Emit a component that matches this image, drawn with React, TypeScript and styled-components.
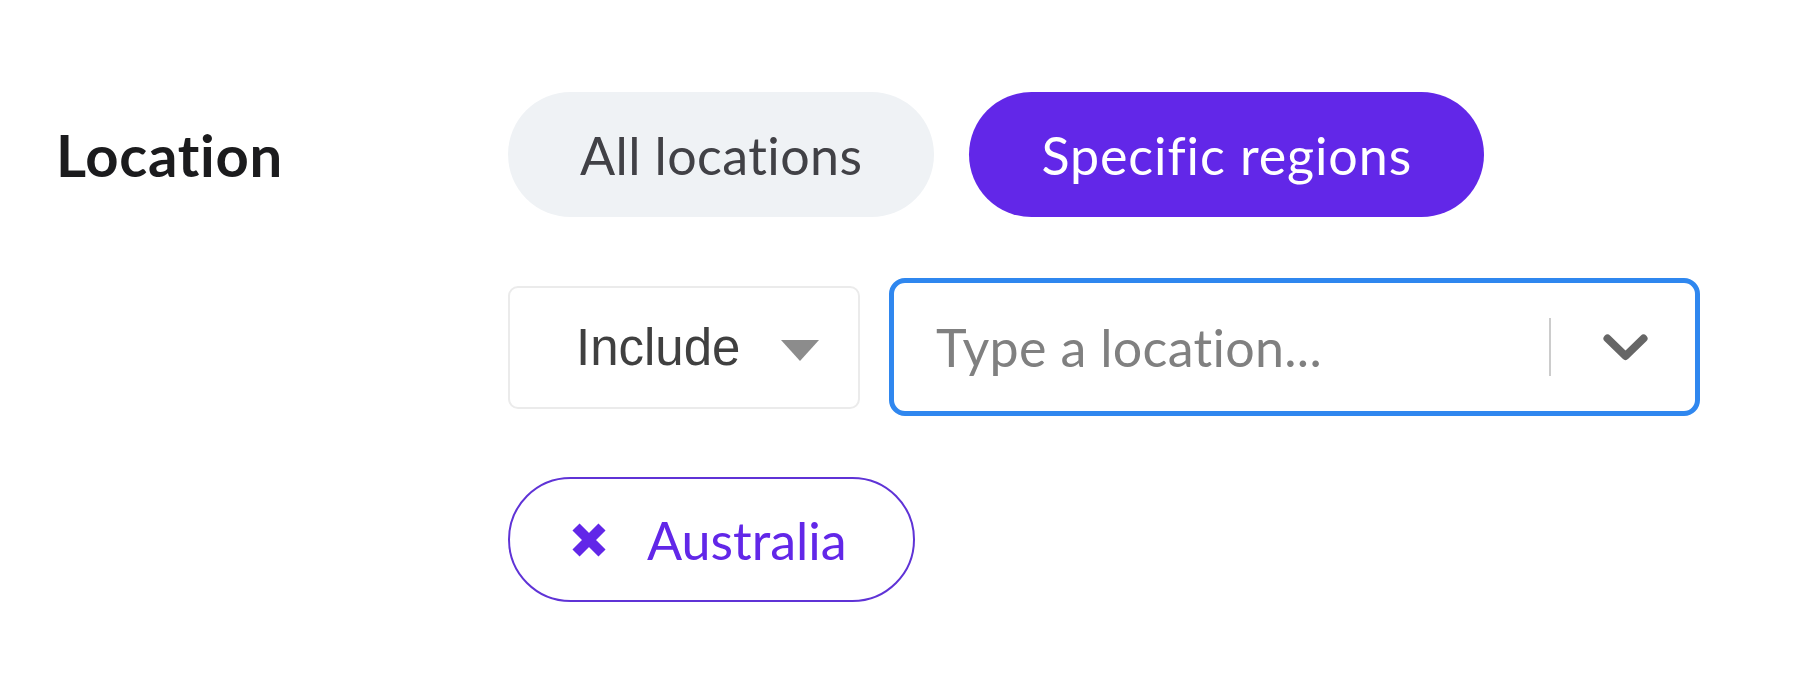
import React from "react";
import styled, { createGlobalStyle } from "styled-components";

const PURPLE = "#6227e8";

const GlobalStyle = createGlobalStyle`
  html, body {
    margin: 0;
    padding: 0;
    background: #ffffff;
  }
  body {
    font-family: Lato, "Noto Sans", sans-serif;
  }
  * {
    box-sizing: border-box;
  }
`;

export default function App() {
  return (
    <>
      <GlobalStyle />
      <Page>
        <Field>
          <Label>Location</Label>
          <Controls>
            <Segmented>
              <Pill>All locations</Pill>
              <Pill active>Specific regions</Pill>
            </Segmented>

            <FilterRow>
              <ModeSelect>
                <ModeText>Include</ModeText>
                <Caret />
              </ModeSelect>
              <SearchBox>
                <SearchInput placeholder="Type a location..." />
                <Separator />
                <Indicator>
                  <svg width="45" height="27" viewBox="0 0 45 27">
                    <polyline
                      points="4.5,4.5 22.5,22 40.5,4.5"
                      fill="none"
                      stroke="#666666"
                      strokeWidth="8"
                      strokeLinecap="round"
                      strokeLinejoin="round"
                    />
                  </svg>
                </Indicator>
              </SearchBox>
            </FilterRow>

            <Tags>
              <Tag>
                <svg width="36" height="36" viewBox="0 0 36 36">
                  <path
                    d="M5 5 L31 31 M31 5 L5 31"
                    stroke={PURPLE}
                    strokeWidth="10"
                    strokeLinecap="butt"
                  />
                </svg>
                <TagText>Australia</TagText>
              </Tag>
            </Tags>
          </Controls>
        </Field>
      </Page>
    </>
  );
}

const Page = styled.div`
  padding: 92px 0 0 56px;
  min-height: 696px;
`;

const Field = styled.div`
  display: grid;
  grid-template-columns: 452px auto;
  align-items: start;
`;

const Label = styled.div`
  font-family: Lato, "Noto Sans", sans-serif;
  font-weight: 700;
  font-size: 58px;
  letter-spacing: 0.7px;
  line-height: 125px;
  color: #1b1b1d;
`;

const Controls = styled.div`
  display: flex;
  flex-direction: column;
  gap: 61px;
`;

const Segmented = styled.div`
  display: flex;
  gap: 35px;
`;

const Pill = styled.button<{ active?: boolean }>`
  height: 125px;
  padding: 0 72px;
  border: none;
  border-radius: 63px;
  font-family: Lato, "Noto Sans", sans-serif;
  font-size: 52px;
  font-weight: 400;
  letter-spacing: ${(p) => (p.active ? "0.9px" : "0.4px")};
  background: ${(p) => (p.active ? PURPLE : "#eff2f5")};
  color: ${(p) => (p.active ? "#ffffff" : "#414146")};
  cursor: pointer;
`;

const FilterRow = styled.div`
  display: flex;
  align-items: center;
  gap: 29px;
`;

const ModeSelect = styled.div`
  width: 352px;
  height: 123px;
  display: flex;
  align-items: center;
  padding-left: 66px;
  border: 2px solid #ebebeb;
  border-radius: 10px;
  background: #ffffff;
`;

const ModeText = styled.span`
  font-family: "Liberation Sans", Arial, sans-serif;
  font-size: 51px;
  color: #404040;
`;

const Caret = styled.span`
  margin-left: 41px;
  width: 0;
  height: 0;
  border-left: 19.5px solid transparent;
  border-right: 19.5px solid transparent;
  border-top: 21px solid #8c8c8c;
  margin-top: 6px;
`;

const SearchBox = styled.div`
  width: 811px;
  height: 138px;
  display: flex;
  align-items: center;
  border: 5px solid #2f87ef;
  border-radius: 16px;
  background: #ffffff;
`;

const SearchInput = styled.input`
  flex: 1;
  min-width: 0;
  height: 100%;
  border: none;
  outline: none;
  background: transparent;
  padding: 0 0 0 42px;
  font-family: Lato, "Noto Sans", sans-serif;
  font-size: 52px;
  letter-spacing: 0.3px;
  color: #333333;

  &::placeholder {
    color: #808080;
  }
`;

const Separator = styled.span`
  width: 2px;
  height: 58px;
  background: #cccccc;
`;

const Indicator = styled.div`
  width: 144px;
  display: flex;
  justify-content: center;
  align-items: center;
  padding-left: 4px;
`;

const Tags = styled.div`
  display: flex;
  flex-wrap: wrap;
  gap: 24px;
`;

const Tag = styled.div`
  height: 125px;
  display: inline-flex;
  align-items: center;
  gap: 40px;
  padding: 0 66px 0 61px;
  border: 2px solid #5f33d6;
  border-radius: 63px;
`;

const TagText = styled.span`
  font-family: Lato, "Noto Sans", sans-serif;
  font-size: 52px;
  color: ${PURPLE};
`;
